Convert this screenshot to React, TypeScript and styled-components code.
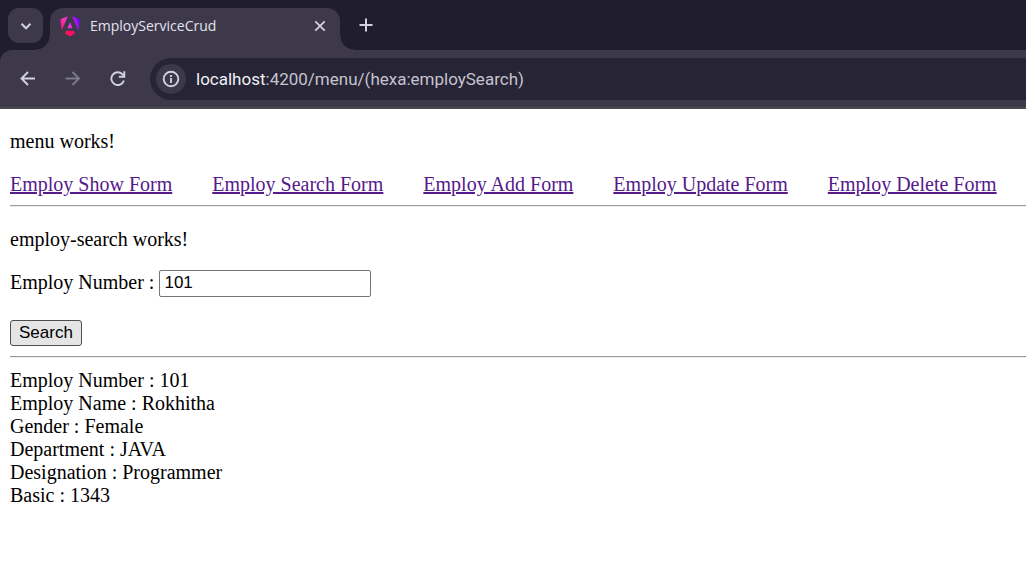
import React, { useState } from "react";
import styled, { createGlobalStyle } from "styled-components";

const color = {
  strip: "#201d2e",
  toolbar: "#3d394b",
  field: "#272435",
  icon: "#d3cfe3",
  iconDim: "#7d798b",
  rule: "#4b474e",
  visited: "#551a8b",
};

const GlobalStyle = createGlobalStyle`
  body {
    margin: 0;
    background: #fff;
    color: #000;
    font: 20px/23px "Liberation Serif", "Times New Roman", serif;
  }
`;

const Chrome = styled.header`
  background: ${color.strip};
  font-family: "Open Sans", "Segoe UI", sans-serif;
`;

const TabStrip = styled.div`
  display: flex;
  align-items: flex-start;
  height: 42px;
  padding: 8px 8px 0;
`;

const IconButton = styled.button<{ $size?: number; $round?: string; $filled?: boolean }>`
  display: flex;
  align-items: center;
  justify-content: center;
  flex: none;
  width: ${(p) => p.$size ?? 32}px;
  height: ${(p) => p.$size ?? 32}px;
  padding: 0;
  border: 0;
  border-radius: ${(p) => p.$round ?? "50%"};
  background: ${(p) => (p.$filled ? color.toolbar : "transparent")};
  color: ${color.icon};

  &:disabled {
    color: ${color.iconDim};
  }
`;

const Tab = styled.div`
  position: relative;
  display: flex;
  align-items: center;
  box-sizing: border-box;
  width: 290px;
  height: 42px;
  margin: 0 9px 0 7px;
  padding: 0 4px 6px 10px;
  border-radius: 13px 13px 0 0;
  background: ${color.toolbar};

  &::before,
  &::after {
    content: "";
    position: absolute;
    bottom: 0;
    width: 14px;
    height: 14px;
  }
  &::before {
    right: 100%;
    background: radial-gradient(circle at 0 0, transparent 13px, ${color.toolbar} 14px);
  }
  &::after {
    left: 100%;
    background: radial-gradient(circle at 100% 0, transparent 13px, ${color.toolbar} 14px);
  }
`;

const TabTitle = styled.span`
  flex: 1;
  margin-left: 10px;
  color: #e4e1ec;
  font-size: 14px;
  line-height: 20px;
`;

const Toolbar = styled.div`
  display: flex;
  align-items: center;
  padding: 8px 0 7px 12px;
  border-bottom: 2px solid ${color.rule};
  border-top-left-radius: 12px;
  background: ${color.toolbar};
`;

const NavButtons = styled.div`
  display: flex;
  gap: 13px;
  margin-right: 16px;
`;

const AddressBar = styled.div`
  display: flex;
  align-items: center;
  flex: 1;
  height: 42px;
  padding-left: 6px;
  border-radius: 21px 0 0 21px;
  background: ${color.field};
`;

const Address = styled.div`
  margin-left: 10px;
  color: #c6c3d0;
  font-family: Roboto, "Segoe UI", sans-serif;
  font-size: 17px;
  line-height: 24px;
`;

const Host = styled.span`
  color: #f0eef6;
`;

const Page = styled.main`
  padding: 21px 0 20px 10px;
`;

const Paragraph = styled.p<{ $after: number }>`
  margin: 0 0 ${(p) => p.$after}px;
`;

const Menu = styled.nav`
  display: flex;
  flex-wrap: wrap;
  column-gap: 40px;
`;

const MenuLink = styled.a`
  color: ${color.visited};
  text-decoration: underline;
`;

const Rule = styled.hr<{ $before: number; $after: number }>`
  margin: ${(p) => p.$before}px 0 ${(p) => p.$after}px;
  border: 0;
  border-top: 1px solid #9a9a9a;
  border-bottom: 1px solid #eeeeee;
`;

const SearchForm = styled.form`
  display: flex;
  flex-direction: column;
  align-items: flex-start;
  gap: 23px;
`;

const Field = styled.div`
  display: flex;
  align-items: flex-start;
  gap: 5px;
  line-height: 25px;
`;

const TextInput = styled.input`
  box-sizing: border-box;
  width: 212px;
  height: 27px;
  padding: 0 4px 1px;
  border: 1px solid #767676;
  border-radius: 2px;
  background: #fff;
  color: #000;
  font: 17px "Liberation Sans", Arial, sans-serif;
`;

const SubmitButton = styled.button`
  height: 26px;
  padding: 0 8px;
  border: 1px solid #4f4f4f;
  border-radius: 3px;
  background: #e5e5e5;
  color: #000;
  font: 17px "Liberation Sans", Arial, sans-serif;
`;

const stroke = { fill: "none", stroke: "currentColor", strokeWidth: 2 } as const;

const ChevronIcon = () => (
  <svg width="12" height="12" viewBox="0 0 12 12" {...stroke} aria-hidden>
    <path d="M1.5 3.8 6 8.3l4.500-4.500" />
  </svg>
);

const CloseIcon = () => (
  <svg width="12" height="12" viewBox="0 0 12 12" {...stroke} strokeWidth={1.8} aria-hidden>
    <path d="M1.300 1.300l9.400 9.400M10.700 1.300l-9.400 9.400" />
  </svg>
);

const PlusIcon = () => (
  <svg width="14" height="14" viewBox="0 0 14 14" {...stroke} aria-hidden>
    <path d="M7 .5v13M.5 7h13" />
  </svg>
);

const ArrowIcon = ({ forward }: { forward?: boolean }) => (
  <svg width="16" height="16" viewBox="0 0 16 16" {...stroke} strokeWidth={1.9} aria-hidden>
    <path d={forward ? "M.5 7.500h13.500M7.500 1 14 7.500 7.500 14" : "M15 7.500H1.500M8 1 1.500 7.500 8 14"} />
  </svg>
);

const ReloadIcon = () => (
  <svg width="16" height="16" viewBox="0 0 16 16" {...stroke} strokeWidth={1.9} aria-hidden>
    <path d="M13.900 9.500a6.400 6.400 0 1 1-1.500-6.300L14.100 5M14.300 .3v5.400H8.900" />
  </svg>
);

const InfoIcon = () => (
  <svg width="18" height="18" viewBox="0 0 18 18" {...stroke} strokeWidth={1.9} aria-hidden>
    <circle cx="9" cy="9" r="7.300" />
    <path d="M9 8v5M9 5v2" />
  </svg>
);

const AngularLogo = () => (
  <svg width="20" height="21" viewBox="0 0 20 21" aria-hidden>
    <defs>
      <linearGradient id="angular" x1="0" y1="12" x2="20" y2="5" gradientUnits="userSpaceOnUse">
        <stop offset="0" stopColor="#f0105f" />
        <stop offset=".3" stopColor="#f637c0" />
        <stop offset=".6" stopColor="#d62df0" />
        <stop offset="1" stopColor="#6a00f5" />
      </linearGradient>
      <linearGradient id="angularBase" x1="0" y1="0" x2="1" y2="0">
        <stop offset="0" stopColor="#ff1a4a" />
        <stop offset="1" stopColor="#f30a7a" />
      </linearGradient>
    </defs>
    <path
      fill="url(#angular)"
      d="M7.800 .3 1.600 14.600.2 3.300zM12.200 .3l6.200 14.300L19.800 3.300zM10 6l2.600 6.200H7.400z"
    />
    <path fill="url(#angularBase)" d="M6.200 14.800h7.600l1.200 2.800L10 20.600l-5-3z" />
  </svg>
);

const links = [
  ["Employ Show Form", "employShow"],
  ["Employ Search Form", "employSearch"],
  ["Employ Add Form", "employAdd"],
  ["Employ Update Form", "employUpdate"],
  ["Employ Delete Form", "employDelete"],
];

const employ = [
  ["Employ Number", "101"],
  ["Employ Name", "Rokhitha"],
  ["Gender", "Female"],
  ["Department", "JAVA"],
  ["Designation", "Programmer"],
  ["Basic", "1343"],
];

export default function App() {
  const [empno, setEmpno] = useState("101");

  return (
    <>
      <GlobalStyle />
      <Chrome>
        <TabStrip>
          <IconButton $size={35} $round="11px" $filled aria-label="Search tabs">
            <ChevronIcon />
          </IconButton>
          <Tab>
            <AngularLogo />
            <TabTitle>EmployServiceCrud</TabTitle>
            <IconButton aria-label="Close tab">
              <CloseIcon />
            </IconButton>
          </Tab>
          <IconButton $size={34} aria-label="New tab">
            <PlusIcon />
          </IconButton>
        </TabStrip>
        <Toolbar>
          <NavButtons>
            <IconButton aria-label="Back">
              <ArrowIcon />
            </IconButton>
            <IconButton aria-label="Forward" disabled>
              <ArrowIcon forward />
            </IconButton>
            <IconButton aria-label="Reload">
              <ReloadIcon />
            </IconButton>
          </NavButtons>
          <AddressBar>
            <IconButton $size={30} $filled aria-label="View site information">
              <InfoIcon />
            </IconButton>
            <Address>
              <Host>localhost</Host>:4200/menu/(hexa:employSearch)
            </Address>
          </AddressBar>
        </Toolbar>
      </Chrome>
      <Page>
        <Paragraph $after={20}>menu works!</Paragraph>
        <Menu>
          {links.map(([label, path]) => (
            <MenuLink key={path} href={`#${path}`}>
              {label}
            </MenuLink>
          ))}
        </Menu>
        <Rule $before={9} $after={21} />
        <Paragraph $after={19}>employ-search works!</Paragraph>
        <SearchForm onSubmit={(e) => e.preventDefault()}>
          <Field>
            <label htmlFor="empno">Employ Number :</label>
            <TextInput id="empno" value={empno} onChange={(e) => setEmpno(e.target.value)} />
          </Field>
          <SubmitButton type="submit">Search</SubmitButton>
        </SearchForm>
        <Rule $before={10} $after={11} />
        {employ.map(([label, value]) => (
          <div key={label}>
            {label} : {value}
          </div>
        ))}
      </Page>
    </>
  );
}
